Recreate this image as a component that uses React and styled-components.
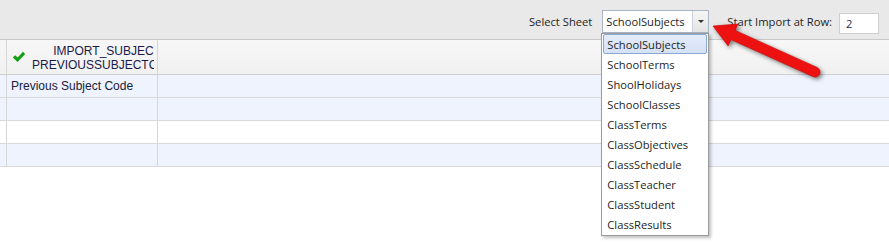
import React from "react";
import styled, { createGlobalStyle } from "styled-components";

const GlobalStyle = createGlobalStyle`
  html, body { margin: 0; padding: 0; background: #ffffff; }
  * { box-sizing: border-box; }
`;

const Page = styled.div`
  position: relative;
  width: 889px;
  height: 247px;
  overflow: hidden;
  background: #ffffff;
`;

const Toolbar = styled.div`
  height: 40px;
  background: #e9e9e9;
  border-bottom: 1px solid #c9c9c9;
  display: flex;
  justify-content: flex-end;
  align-items: flex-start;
  padding: 10px 10px 0 0;
  font-family: "Open Sans", sans-serif;
  font-size: 11.2px;
  color: #1e1e1e;
`;

const Label = styled.span`
  line-height: 23px;
  margin-right: ${(p) => p.$gap}px;
  white-space: nowrap;
`;

const SelectWrap = styled.div`
  position: relative;
  margin-right: 18px;
`;

const SelectBox = styled.div`
  width: 107px;
  height: 23px;
  border: 1px solid #a9b4c6;
  background: #ffffff;
  display: flex;
`;

const SelectValue = styled.div`
  flex: 1;
  padding-left: 3px;
  line-height: 21px;
  white-space: nowrap;
`;

const SelectButton = styled.div`
  width: 16px;
  border-left: 1px solid #c9d2df;
  background: linear-gradient(#f6f6f6, #e4e4e4);
  display: flex;
  align-items: center;
  justify-content: center;
`;

const Caret = styled.div`
  width: 0;
  height: 0;
  border-left: 3px solid transparent;
  border-right: 3px solid transparent;
  border-top: 3px solid #333;
`;

const Popup = styled.div`
  position: absolute;
  top: 23px;
  left: -1px;
  width: 108px;
  background: #ffffff;
  border: 1px solid #9c9c9c;
  box-shadow: 2px 2px 3px rgba(0, 0, 0, 0.25);
  padding: 0 1px 1px 1px;
  z-index: 5;
`;

const Item = styled.div`
  height: 20px;
  line-height: 18px;
  padding: 1px 0 0 3px;
  border: 1px solid ${(p) => (p.$active ? "#8aa8d4" : "transparent")};
  border-radius: 2px;
  background: ${(p) => (p.$active ? "linear-gradient(#e4ecfa, #d6e1f5)" : "transparent")};
  color: #1e1e1e;
  white-space: nowrap;
`;

const RowInput = styled.div`
  width: 40px;
  height: 21px;
  margin-top: 3px;
  border: 1px solid #cfcfcf;
  background: #fff;
  padding-left: 6px;
  line-height: 19px;
  color: #1e2a55;
`;

const Grid = styled.div`
  display: grid;
  grid-template-columns: 7px 151px 1fr;
  font-family: "Liberation Sans", Arial, sans-serif;
  font-size: 12px;
  color: #20203a;
`;

const Cell = styled.div`
  height: ${(p) => (p.$header ? 35 : 23)}px;
  border-right: ${(p) => (p.$last ? "none" : "1px solid #d6d6d6")};
  border-bottom: 1px solid ${(p) => (p.$header ? "#cfcfcf" : "#d9d9d9")};
  background: ${(p) =>
    p.$header ? "linear-gradient(#f7f7f7, #f1f1f1)" : p.$alt ? "#eef3fd" : "#ffffff"};
  overflow: hidden;
`;

const HeaderCell = styled(Cell)`
  display: flex;
  align-items: center;
  padding: 0 0 0 5px;
`;

const HeaderClip = styled.div`
  flex: 1;
  min-width: 0;
  overflow: hidden;
  margin-right: 3px;
  padding-left: 6px;
`;

const HeaderText = styled.div`
  width: 137px;
  text-align: right;
  line-height: 14px;
  white-space: nowrap;
  color: #1a1a4a;
  padding-top: 1px;
`;

const DataCell = styled(Cell)`
  padding-left: 4px;
  line-height: 22px;
  white-space: nowrap;
`;

const ArrowSvg = styled.svg`
  position: absolute;
  left: 0;
  top: 0;
  pointer-events: none;
  filter: drop-shadow(2px 2px 2px rgba(0, 0, 0, 0.5));
  z-index: 10;
`;

const sheets = [
  "SchoolSubjects",
  "SchoolTerms",
  "ShoolHolidays",
  "SchoolClasses",
  "ClassTerms",
  "ClassObjectives",
  "ClassSchedule",
  "ClassTeacher",
  "ClassStudent",
  "ClassResults",
];

const rows = [
  { text: "Previous Subject Code", alt: true },
  { text: "", alt: true },
  { text: "", alt: false },
  { text: "", alt: true },
];

function Check() {
  return (
    <svg width="14" height="12" viewBox="0 0 14 12" style={{ flex: "none" }}>
      <path d="M0.8 6.4 L3.2 4.2 L5.6 6.6 L11 0.8 L13.2 3 L5.6 11 Z" fill="#14a014" />
    </svg>
  );
}

export default function App() {
  return (
    <Page>
      <GlobalStyle />
      <Toolbar>
        <Label $gap={10}>Select Sheet</Label>
        <SelectWrap>
          <SelectBox>
            <SelectValue>SchoolSubjects</SelectValue>
            <SelectButton>
              <Caret />
            </SelectButton>
          </SelectBox>
          <Popup>
            {sheets.map((s, i) => (
              <Item key={s} $active={i === 0}>
                {s}
              </Item>
            ))}
          </Popup>
        </SelectWrap>
        <Label $gap={7}>Start Import at Row:</Label>
        <RowInput>2</RowInput>
      </Toolbar>
      <Grid>
        <Cell $header />
        <HeaderCell $header>
          <Check />
          <HeaderClip>
            <HeaderText>
              IMPORT_SUBJECTS
              <br />
              PREVIOUSSUBJECTCODE
            </HeaderText>
          </HeaderClip>
        </HeaderCell>
        <Cell $header $last />
        {rows.map((r, i) => (
          <React.Fragment key={i}>
            <Cell $alt={r.alt} />
            <DataCell $alt={r.alt}>{r.text}</DataCell>
            <Cell $alt={r.alt} $last />
          </React.Fragment>
        ))}
      </Grid>
      <ArrowSvg width="889" height="247">
        <path
          d="M713 26 L737.9 24.1 L735.1 30.4 L817.1 67.4 A5 5 0 0 1 812.9 76.6 L730.9 39.6 L728.1 45.9 Z"
          fill="#ee1111"
          stroke="#cc0000"
          strokeWidth="0.6"
          strokeLinejoin="round"
        />
      </ArrowSvg>
    </Page>
  );
}
